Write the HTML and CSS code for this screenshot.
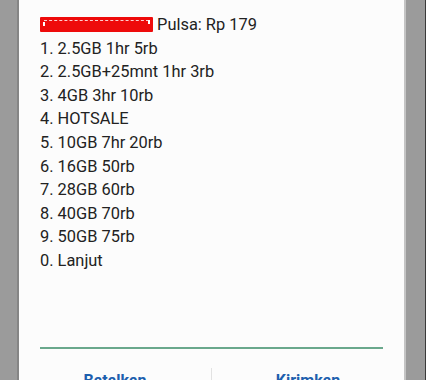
FILE: index.html
```html
<!DOCTYPE html>
<html>
<head>
<meta charset="utf-8">
<link rel="stylesheet" href="styles.css">
</head>
<body>
<div class="screen">
  <div class="side side-left"></div>
  <div class="dialog">
    <div class="message">
      <div class="line"><span class="redact"><span class="dash"></span><span class="dot dot-l"></span><span class="dot dot-r"></span></span> Pulsa: Rp 179</div>
      <div class="line">1. 2.5GB 1hr 5rb</div>
      <div class="line">2. 2.5GB+25mnt 1hr 3rb</div>
      <div class="line">3. 4GB 3hr 10rb</div>
      <div class="line">4. HOTSALE</div>
      <div class="line">5. 10GB 7hr 20rb</div>
      <div class="line">6. 16GB 50rb</div>
      <div class="line">7. 28GB 60rb</div>
      <div class="line">8. 40GB 70rb</div>
      <div class="line">9. 50GB 75rb</div>
      <div class="line">0. Lanjut</div>
    </div>
    <div class="input"></div>
    <div class="actions">
      <div class="btn">Batalkan</div>
      <div class="sep"></div>
      <div class="btn">Kirimkan</div>
    </div>
  </div>
  <div class="side side-right"></div>
</div>
</body>
</html>
```
FILE: styles.css
```css
html, body {
  margin: 0;
  padding: 0;
  width: 426px;
  height: 380px;
  overflow: hidden;
  background: #9b9b9b;
}
.screen {
  display: flex;
  width: 426px;
  height: 380px;
  font-family: Roboto, "Noto Sans", sans-serif;
}
.side {
  background: #9b9b9b;
  flex-shrink: 0;
}
.side-left {
  width: 17px;
  border-right: 2px solid #858585;
}
.side-right {
  box-sizing: border-box;
  width: 22px;
  border-left: 2px solid #c4c4c4;
  border-right: 1px solid #3a3a3a;
}
.dialog {
  flex: 1;
  background: #fcfcfc;
  padding-top: 13px;
  display: flex;
  flex-direction: column;
  overflow: hidden;
}
.message {
  flex-shrink: 0;
  margin: 0 20px 0 21px;
  font-size: 16.4px;
  line-height: 23.6px;
  color: #222;
}
.redact {
  display: inline-block;
  position: relative;
  width: 113px;
  height: 15px;
  background: #ee0b0b;
  border-radius: 1px;
  vertical-align: -2px;
}
.dash {
  position: absolute;
  left: 4px;
  right: 4px;
  top: 3px;
  border-top: 1px dashed #ffd0d0;
}
.dot {
  position: absolute;
  width: 2px;
  height: 4px;
  background: #fff;
}
.dot-l { left: 3px; top: 5px; }
.dot-r { right: 3px; top: 3px; }
.input {
  flex-shrink: 0;
  margin: 74px 21px 0 21px;
  height: 2px;
  background: #6aa88c;
}
.actions {
  flex-shrink: 0;
  display: flex;
  align-items: flex-start;
  margin-top: 19px;
}
.btn {
  flex: 1;
  text-align: center;
  font-size: 16px;
  font-weight: 700;
  color: #1d5fae;
  padding-top: 3px;
}
.sep {
  width: 1px;
  height: 20px;
  background: #e2e2e2;
}
```
